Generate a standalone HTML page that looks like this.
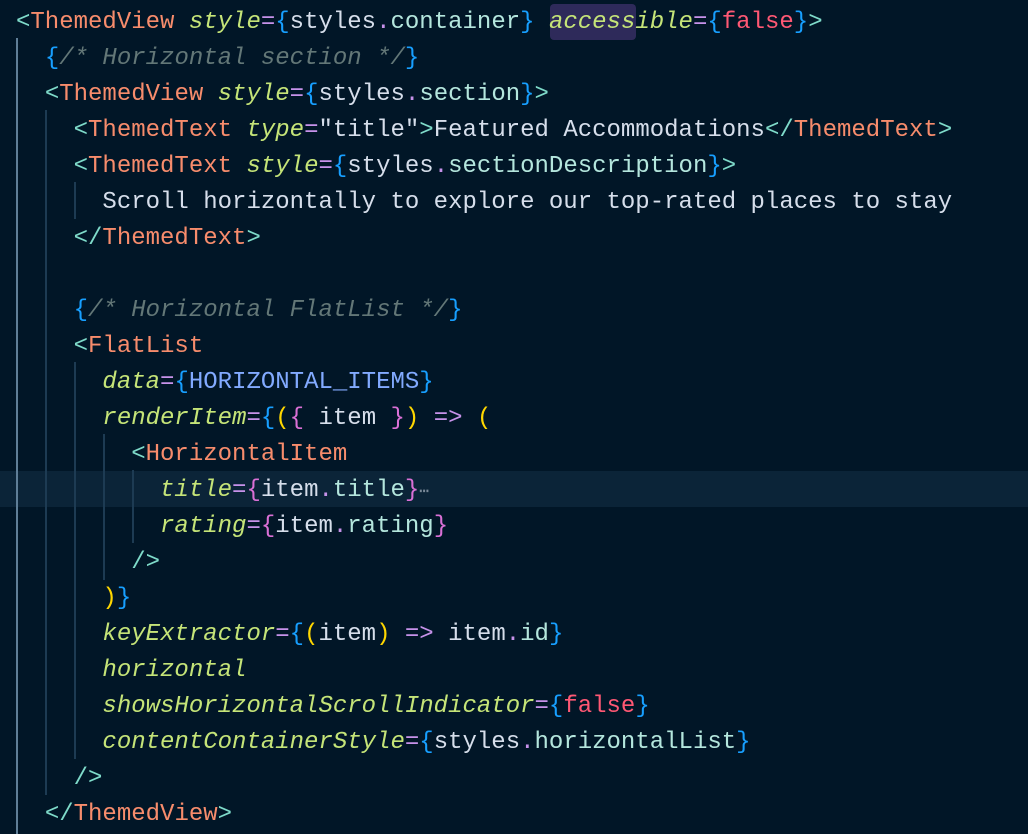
<!DOCTYPE html>
<html><head><meta charset="utf-8"><style>
html,body{margin:0;padding:0;background:#011627;width:1028px;height:834px;overflow:hidden}
#c{position:relative;width:1028px;height:834px;font-family:"Liberation Mono",monospace;font-size:24px;color:#d6deeb}
.l{position:absolute;left:16px;margin-top:3px;height:36px;line-height:36px;white-space:pre}
.g{position:absolute;width:2px;background:#1d3b53}
.t{color:#f78c6c}.b{color:#7fdbca}.a{color:#c5e478;font-style:italic}.e{color:#c792ea}
.p1{color:#179fff}.p2{color:#ffd700}.p3{color:#da70d6}.pr{color:#b4e6dd}.cm{color:#637777;font-style:italic}
.f{color:#ff5874}.k{color:#82aaff}.s{color:#d6deeb}
</style></head><body><div id="c">
<div style="position:absolute;left:0;top:471px;width:1028px;height:36px;background:#0b2438"></div>
<div style="position:absolute;left:550px;top:4px;width:86px;height:36px;background:#2e2a5a;border-radius:4px"></div>
<div class="g" style="left:16px;top:38px;height:796px;background:#5f7e97"></div>
<div class="g" style="left:45px;top:110px;height:685px"></div>
<div class="g" style="left:74px;top:182px;height:37px"></div>
<div class="g" style="left:74px;top:362px;height:397px"></div>
<div class="g" style="left:103px;top:434px;height:146px"></div>
<div class="g" style="left:132px;top:470px;height:73px"></div>

<div class="l" style="top:2px"><span class="b">&lt;</span><span class="t">ThemedView</span> <span class="a">style</span><span class="e">=</span><span class="p1">{</span>styles<span class="e">.</span><span class="pr">container</span><span class="p1">}</span> <span class="a">accessible</span><span class="e">=</span><span class="p1">{</span><span class="f">false</span><span class="p1">}</span><span class="b">&gt;</span></div>
<div class="l" style="top:38px">  <span class="p1">{</span><span class="cm">/* Horizontal section */</span><span class="p1">}</span></div>
<div class="l" style="top:74px">  <span class="b">&lt;</span><span class="t">ThemedView</span> <span class="a">style</span><span class="e">=</span><span class="p1">{</span>styles<span class="e">.</span><span class="pr">section</span><span class="p1">}</span><span class="b">&gt;</span></div>
<div class="l" style="top:110px">    <span class="b">&lt;</span><span class="t">ThemedText</span> <span class="a">type</span><span class="e">=</span>"title"<span class="b">&gt;</span>Featured Accommodations<span class="b">&lt;/</span><span class="t">ThemedText</span><span class="b">&gt;</span></div>
<div class="l" style="top:146px">    <span class="b">&lt;</span><span class="t">ThemedText</span> <span class="a">style</span><span class="e">=</span><span class="p1">{</span>styles<span class="e">.</span><span class="pr">sectionDescription</span><span class="p1">}</span><span class="b">&gt;</span></div>
<div class="l" style="top:182px">      Scroll horizontally to explore our top-rated places to stay</div>
<div class="l" style="top:218px">    <span class="b">&lt;/</span><span class="t">ThemedText</span><span class="b">&gt;</span></div>
<div class="l" style="top:290px">    <span class="p1">{</span><span class="cm">/* Horizontal FlatList */</span><span class="p1">}</span></div>
<div class="l" style="top:326px">    <span class="b">&lt;</span><span class="t">FlatList</span></div>
<div class="l" style="top:362px">      <span class="a">data</span><span class="e">=</span><span class="p1">{</span><span class="k">HORIZONTAL_ITEMS</span><span class="p1">}</span></div>
<div class="l" style="top:398px">      <span class="a">renderItem</span><span class="e">=</span><span class="p1">{</span><span class="p2">(</span><span class="p3">{</span> item <span class="p3">}</span><span class="p2">)</span> <span class="e">=&gt;</span> <span class="p2">(</span></div>
<div class="l" style="top:434px">        <span class="b">&lt;</span><span class="t">HorizontalItem</span></div>
<div class="l" style="top:470px">          <span class="a">title</span><span class="e">=</span><span class="p3">{</span>item<span class="e">.</span><span class="pr">title</span><span class="p3">}</span><span style="color:#7a8a99;font-size:16px">⋯</span></div>
<div class="l" style="top:506px">          <span class="a">rating</span><span class="e">=</span><span class="p3">{</span>item<span class="e">.</span><span class="pr">rating</span><span class="p3">}</span></div>
<div class="l" style="top:542px">        <span class="b">/&gt;</span></div>
<div class="l" style="top:578px">      <span class="p2">)</span><span class="p1">}</span></div>
<div class="l" style="top:614px">      <span class="a">keyExtractor</span><span class="e">=</span><span class="p1">{</span><span class="p2">(</span>item<span class="p2">)</span> <span class="e">=&gt;</span> item<span class="e">.</span><span class="pr">id</span><span class="p1">}</span></div>
<div class="l" style="top:650px">      <span class="a">horizontal</span></div>
<div class="l" style="top:686px">      <span class="a">showsHorizontalScrollIndicator</span><span class="e">=</span><span class="p1">{</span><span class="f">false</span><span class="p1">}</span></div>
<div class="l" style="top:722px">      <span class="a">contentContainerStyle</span><span class="e">=</span><span class="p1">{</span>styles<span class="e">.</span><span class="pr">horizontalList</span><span class="p1">}</span></div>
<div class="l" style="top:758px">    <span class="b">/&gt;</span></div>
<div class="l" style="top:794px">  <span class="b">&lt;/</span><span class="t">ThemedView</span><span class="b">&gt;</span></div>
</div></body></html>
